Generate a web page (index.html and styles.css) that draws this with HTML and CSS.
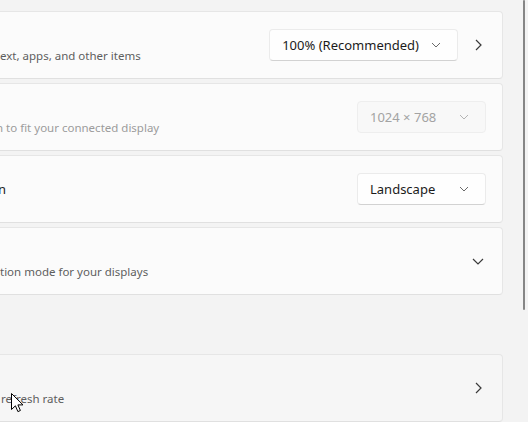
FILE: index.html
```html
<!DOCTYPE html>
<html lang="en">
<head>
<meta charset="utf-8">
<title>Display settings</title>
<link rel="stylesheet" href="styles.css">
</head>
<body>
<div class="page">
  <div class="list">
    <div class="card">
      <div class="text">
        <div class="title blank"></div>
        <div class="desc">ext, apps, and other items</div>
      </div>
      <div class="controls">
        <div class="dd dd-wide"><span>100% (Recommended)</span><svg class="dd-chev" viewBox="0 0 10 6"><path d="M1 1 L5 5 L9 1"/></svg></div>
        <svg class="chev-right" viewBox="0 0 16 16"><path d="M6 3 L11 8 L6 13"/></svg>
      </div>
    </div>
    <div class="card">
      <div class="text">
        <div class="title blank"></div>
        <div class="desc muted shift-n">n to fit your connected display</div>
      </div>
      <div class="controls">
        <div class="dd disabled"><span>1024 × 768</span><svg class="dd-chev" viewBox="0 0 10 6"><path d="M1 1 L5 5 L9 1"/></svg></div>
      </div>
    </div>
    <div class="card">
      <div class="text">
        <div class="title shift-t">n</div>
      </div>
      <div class="controls">
        <div class="dd"><span>Landscape</span><svg class="dd-chev" viewBox="0 0 10 6"><path d="M1 1 L5 5 L9 1"/></svg></div>
      </div>
    </div>
    <div class="card">
      <div class="text">
        <div class="title blank"></div>
        <div class="desc">tion mode for your displays</div>
      </div>
      <div class="controls">
        <svg class="chev-down" viewBox="0 0 16 16"><path d="M3 6 L8 11 L13 6"/></svg>
      </div>
    </div>
    <div class="card hover related">
      <div class="text">
        <div class="title blank"></div>
        <div class="desc shift-r">refresh rate</div>
      </div>
      <div class="controls">
        <svg class="chev-right" viewBox="0 0 16 16"><path d="M6 3 L11 8 L6 13"/></svg>
      </div>
    </div>
  </div>
  <div class="scrollbar"></div>
  <svg class="cursor" viewBox="0 0 13 20"><path d="M0.5 0.5 L0.5 16.5 L4.4 12.8 L6.9 18.6 L9.4 17.5 L6.9 11.9 L12 11.9 Z"/></svg>
</div>
</body>
</html>
```

FILE: styles.css
```css
html, body {
  margin: 0;
  padding: 0;
  background: #f3f3f3;
  overflow: hidden;
}

body {
  font-family: "Segoe UI", "Noto Sans", "Open Sans", sans-serif;
  color: #1b1b1b;
  width: 528px;
  height: 422px;
}

.page {
  position: relative;
  width: 528px;
  height: 422px;
}

.list {
  margin-left: -12px;
  width: 515px;
  padding-top: 11px;
  display: flex;
  flex-direction: column;
  gap: 4px;
}

.card {
  box-sizing: border-box;
  height: 68px;
  background: #fbfbfb;
  border: 1px solid #e6e6e6;
  border-bottom-color: #e0e0e0;
  border-radius: 4px;
  display: flex;
  align-items: center;
  justify-content: space-between;
  padding: 0 16px 0 11px;
}

.card.hover {
  background: #f6f6f6;
}

.card.related {
  margin-top: 55px;
}

.text {
  display: flex;
  flex-direction: column;
  white-space: nowrap;
}

.title {
  font-size: 13px;
  line-height: 20px;
}

.title.blank {
  height: 20px;
}

.desc {
  font-size: 11.5px;
  line-height: 16px;
  margin-top: 2px;
  color: #5e5e5e;
}

.desc.muted {
  color: #9c9c9c;
}

.shift-n {
  margin-left: -4px;
}

.shift-t {
  margin-left: -2px;
}

.shift-r {
  margin-left: 1px;
}

.controls {
  display: flex;
  align-items: center;
  gap: 12px;
}

.dd {
  box-sizing: border-box;
  height: 32px;
  min-width: 129px;
  display: flex;
  align-items: center;
  justify-content: space-between;
  gap: 12px;
  padding: 0 16px 0 12px;
  background: #fefefe;
  border: 1px solid #ebebeb;
  border-bottom-color: #d2d2d2;
  border-radius: 4px;
  font-size: 13px;
  color: #1b1b1b;
  white-space: nowrap;
}

.dd.disabled {
  background: #f8f8f8;
  border-color: #eeeeee;
  color: #a3a3a3;
}

.dd-chev {
  width: 10px;
  height: 6px;
  fill: none;
  stroke: #6a6a6a;
  stroke-width: 1;
}

.dd.disabled .dd-chev {
  stroke: #b4b4b4;
}

.chev-right,
.chev-down {
  width: 16px;
  height: 16px;
  fill: none;
  stroke: #3a3a3a;
  stroke-width: 1.2;
}

.scrollbar {
  position: absolute;
  top: 0;
  left: 523px;
  width: 2px;
  height: 310px;
  border-radius: 1px;
  background: #868686;
}

.cursor {
  position: absolute;
  left: 11px;
  top: 393px;
  width: 13px;
  height: 20px;
  fill: #ffffff;
  stroke: #000000;
  stroke-width: 1;
}
```
